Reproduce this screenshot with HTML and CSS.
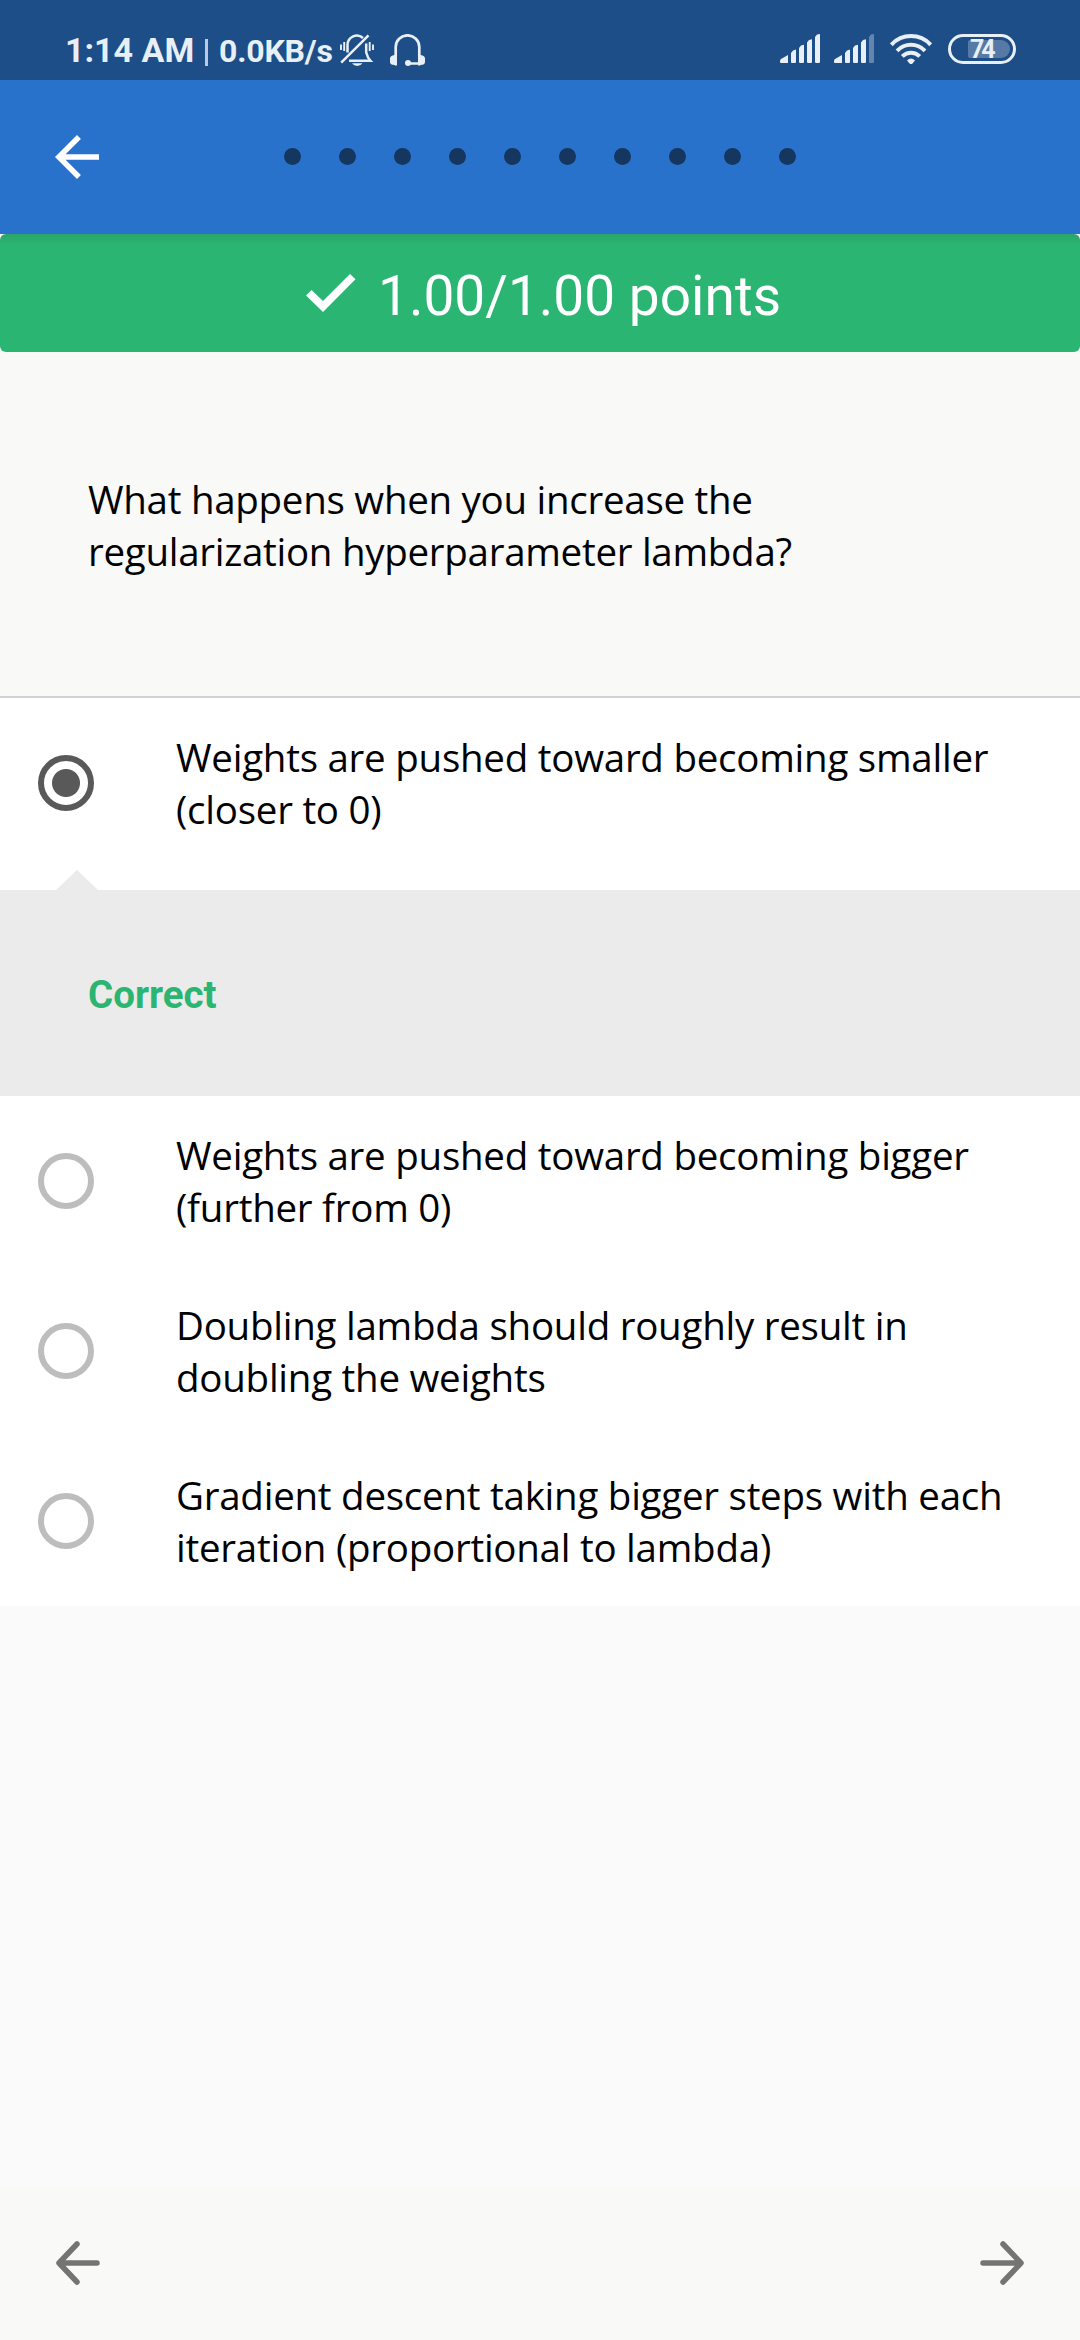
FILE: index.html
```html
<!DOCTYPE html>
<html lang="en">
<head>
<meta charset="utf-8">
<title>Quiz</title>
<link rel="stylesheet" href="styles.css">
</head>
<body>
<div class="screen">
  <div class="status">
    <span class="clock">1:14 AM</span>
    <span class="sep"></span>
    <span class="speed">0.0KB/s</span>
    <svg class="bell" width="34" height="32" viewBox="0 0 34 32" fill="none" stroke="currentColor" stroke-width="2.5">
      <path d="M7.5 18.500V11A9.300 9.700 0 0 1 23 4M26.200 9.500V18.500Q27.500 23.500 30.500 26.800H9M1.200 28.600L28.500 1.300"/>
      <path d="M1 10.500v5.500M4.200 8v9M29.700 8v9M33 10.500v5.500" stroke-width="1.900"/>
      <path d="M12 29.200h10.500Q20.500 32 17.200 32T12 29.200z" fill="currentColor" stroke="none"/>
    </svg>
    <svg class="headset" width="35" height="32" viewBox="0 0 35 32" fill="none" stroke="currentColor" stroke-width="2.700">
      <path d="M5.700 22V13a11.800 11.700 0 0 1 23.600 0V22M18 29.500h10" />
      <path d="M4.500 21H7v10q-1 1.300-2.500 0-4.500 0-4.500-3v-3.500Q0 21.500 4.500 21zM30.500 21H28v10q1 1.300 2.500 0 4.500 0 4.500-3v-3.500q0-3-4.500-3.500z" fill="currentColor" stroke="none"/>
      <circle cx="18" cy="29" r="3" fill="currentColor" stroke="none"/>
    </svg>
    <svg class="signal" width="40" height="29" viewBox="0 0 40 29" fill="currentColor">
      <path d="M0 27q0-1.200 1-2l7-4v8H1q-1 0-1-1zM11 19l2-2.500 3-1V28q0 1-1 1h-3q-1 0-1-1zM19 14l2-2.500 3-.8V28q0 1-1 1h-3q-1 0-1-1zM27 8.500L29 6l3-.8V28q0 1-1 1h-3q-1 0-1-1z"/>
      <path d="M35 3l2-2.500L40 0v28q0 1-1 1h-3q-1 0-1-1z"/>
    </svg>
    <svg class="signal second" width="40" height="29" viewBox="0 0 40 29" fill="currentColor">
      <path d="M0 27q0-1.200 1-2l7-4v8H1q-1 0-1-1zM11 19l2-2.500 3-1V28q0 1-1 1h-3q-1 0-1-1zM19 14l2-2.500 3-.8V28q0 1-1 1h-3q-1 0-1-1zM27 8.500L29 6l3-.8V28q0 1-1 1h-3q-1 0-1-1z"/>
      <path opacity=".35" d="M35 3l2-2.500L40 0v28q0 1-1 1h-3q-1 0-1-1z"/>
    </svg>
    <svg class="wifi" width="42" height="30" viewBox="0 0 42 30" fill="none" stroke="currentColor" stroke-width="4">
      <path d="M1.300 10.800C12-.8 30-.8 40.700 10.800M7 16.800c8-8 20-8 28 0M12.300 22.400c5-4.900 12.400-4.900 17.400 0"/>
      <path d="M17 26.500q4-3.800 8 0L22.500 29.500q-1.500 1-3 0z" fill="currentColor" stroke="none"/>
    </svg>
    <div class="battery"><div class="level">74</div></div>
  </div>

  <header class="appbar">
    <svg class="back" width="66" height="66" viewBox="0 0 24 24"><path fill="#fff" d="M20 11H7.830l5.590-5.590L12 4l-8 8 8 8 1.410-1.410L7.830 13H20v-2z"/></svg>
    <div class="dots"><i></i><i></i><i></i><i></i><i></i><i></i><i></i><i></i><i></i><i></i></div>
  </header>

  <div class="score">
    <svg width="50" height="38" viewBox="0 0 50 38"><path fill="#fff" d="M0 21.500L5.500 16 17 27 44 0l5.500 5.300L17 38z"/></svg>
    <span>1.00/1.00 points</span>
  </div>

  <section class="question">What happens when you increase the<br>regularization hyperparameter lambda?</section>

  <div class="options">
    <label class="option"><span class="radio on"></span><span>Weights are pushed toward becoming smaller<br>(closer to 0)</span></label>
    <div class="pointer"></div>
    <div class="feedback">Correct</div>
    <label class="option"><span class="radio"></span><span>Weights are pushed toward becoming bigger<br>(further from 0)</span></label>
    <label class="option"><span class="radio"></span><span>Doubling lambda should roughly result in<br>doubling the weights</span></label>
    <label class="option"><span class="radio"></span><span>Gradient descent taking bigger steps with each<br>iteration (proportional to lambda)</span></label>
  </div>

  <nav class="pager">
    <svg width="44" height="44" viewBox="0 0 44 44"><path d="M41 22H4M21 3L3 22l18 19"/></svg>
    <svg width="44" height="44" viewBox="0 0 44 44"><path d="M3 22h37M23 3l18 19-18 19"/></svg>
  </nav>
</div>
</body>
</html>
```

FILE: styles.css
```css
* { box-sizing: border-box; }
body { margin: 0; font-family: "Open Sans", sans-serif; }
svg { display: block; flex: none; }

.screen {
  width: 1080px;
  height: 2340px;
  display: flex;
  flex-direction: column;
  background: #fafafa;
  overflow: hidden;
}

.status {
  height: 80px;
  flex: none;
  display: flex;
  align-items: flex-start;
  padding: 34px 64px 0 65px;
  background: #1d4e87;
  color: #e8eff7;
  font-family: Roboto, sans-serif;
  font-weight: 700;
  white-space: nowrap;
}
.clock { width: 140px; font-size: 34px; line-height: 32px; }
.sep { width: 3px; height: 27px; margin-top: 5px; background: #b9cae0; }
.speed { width: 124px; margin-left: 11px; font-size: 32px; line-height: 34px; letter-spacing: -.2px; }
.bell { margin-left: -3px; }
.headset { margin-left: 16px; }
.signal { margin-left: auto; }
.signal.second { margin-left: 14px; }
.wifi { margin-left: 16px; }
.battery {
  width: 68px;
  height: 30px;
  margin-left: 16px;
  padding: 3px 3px 3px 17px;
  border: 3px solid #e8eff7;
  border-radius: 15px;
}
.level {
  width: 42px;
  height: 18px;
  padding-left: 2px;
  border-radius: 2px 9px 9px 2px;
  background: #567aa5;
  font-size: 25px;
  line-height: 19px;
  letter-spacing: -3px;
}

.appbar {
  height: 154px;
  flex: none;
  display: flex;
  align-items: center;
  padding-left: 44px;
  background: #2972cc;
}
.dots { display: flex; gap: 38px; margin: 0 0 1px 174px; }
.dots i { width: 17px; height: 17px; border-radius: 50%; background: #14365f; }

.score {
  height: 118px;
  flex: none;
  display: flex;
  align-items: center;
  padding-left: 306px;
  gap: 22px;
  border-radius: 6px;
  background: linear-gradient(#2aa569, #2bb573 12px);
  color: #fff;
  font-family: Roboto, sans-serif;
  font-size: 55px;
  line-height: 64px;
}
.score span { padding-top: 6px; }

.question {
  height: 346px;
  flex: none;
  padding: 121px 88px 0;
  border-bottom: 2px solid #d2d2d2;
  background: #f9f9f7;
  color: #000;
  font-size: 38.5px;
  line-height: 52px;
  letter-spacing: -.28px;
}

.options { background: #fff; }
.option {
  height: 170px;
  display: flex;
  align-items: center;
  gap: 82px;
  padding-left: 38px;
  font-size: 38.5px;
  line-height: 52px;
  letter-spacing: -.25px;
  color: #000;
  white-space: nowrap;
}
.radio {
  width: 56px;
  height: 56px;
  flex: none;
  border: 6px solid #bdbdbd;
  border-radius: 50%;
}
.radio.on {
  border-color: #595959;
  background: radial-gradient(circle, #595959 13.500px, transparent 14.500px);
}
.pointer {
  width: 42px;
  height: 20px;
  margin: 2px 0 0 56px;
  background: #ebebeb;
  clip-path: polygon(50% 0, 100% 100%, 0 100%);
}
.feedback {
  height: 206px;
  padding: 82px 88px 0;
  background: #ebebeb;
  color: #2bb573;
  font: 700 38.5px/46px Roboto, sans-serif;
}

.pager {
  height: 154px;
  margin-top: auto;
  display: flex;
  align-items: center;
  justify-content: space-between;
  padding: 0 56px;
  background: #f9f9f7;
}
.pager path {
  fill: none;
  stroke: #747472;
  stroke-width: 5.500;
  stroke-linecap: round;
  stroke-linejoin: round;
}
```
